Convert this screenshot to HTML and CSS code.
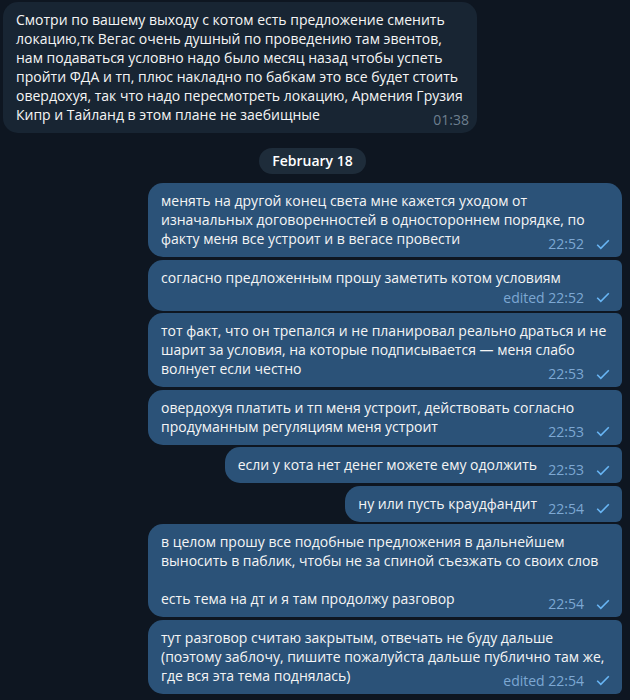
FILE: index.html
```html
<!DOCTYPE html>
<html lang="ru">
<head>
    <meta charset="UTF-8">
    <title>Chat</title>
    <link rel="stylesheet" href="styles.css">
</head>
<body>

    <div class="chat">
        <!-- incoming -->
        <div class="msg in">
            <div class="bubble">
                <div class="text">Смотри по вашему выходу с котом есть предложение сменить локацию,тк Вегас очень душный по проведению там эвентов, нам подаваться условно надо было месяц назад чтобы успеть пройти ФДА и тп, плюс накладно по бабкам это все будет стоить овердохуя, так что надо пересмотреть локацию, Армения Грузия Кипр и Тайланд в этом плане не заебищные<span class="spacer"></span></div>
                <div class="meta"><span class="time">01:38</span></div>
            </div>
        </div>

        <div class="date"><span>February 18</span></div>

        <!-- outgoing -->
        <div class="msg out">
            <div class="bubble">
                <div class="text">менять на другой конец света мне кажется уходом от изначальных договоренностей в одностороннем порядке, по факту меня все устроит и в вегасе провести<span class="spacer"></span></div>
                <div class="meta"><span class="time">22:52</span><svg class="check" viewBox="0 0 14 11"><path d="M1.2 5.8 L4.8 9.3 L12.8 1.3"/></svg></div>
            </div>
        </div>
        <div class="msg out">
            <div class="bubble">
                <div class="text">согласно предложенным прошу заметить котом условиям<span class="spacer edited"></span></div>
                <div class="meta"><span class="time">edited 22:52</span><svg class="check" viewBox="0 0 14 11"><path d="M1.2 5.8 L4.8 9.3 L12.8 1.3"/></svg></div>
            </div>
        </div>
        <div class="msg out">
            <div class="bubble">
                <div class="text">тот факт, что он трепался и не планировал реально драться и не шарит за условия, на которые подписывается — меня слабо волнует если честно<span class="spacer"></span></div>
                <div class="meta"><span class="time">22:53</span><svg class="check" viewBox="0 0 14 11"><path d="M1.2 5.8 L4.8 9.3 L12.8 1.3"/></svg></div>
            </div>
        </div>
        <div class="msg out">
            <div class="bubble">
                <div class="text">овердохуя платить и тп меня устроит, действовать согласно продуманным регуляциям меня устроит<span class="spacer"></span></div>
                <div class="meta"><span class="time">22:53</span><svg class="check" viewBox="0 0 14 11"><path d="M1.2 5.8 L4.8 9.3 L12.8 1.3"/></svg></div>
            </div>
        </div>
        <div class="msg out">
            <div class="bubble">
                <div class="text">если у кота нет денег можете ему одолжить<span class="spacer"></span></div>
                <div class="meta"><span class="time">22:53</span><svg class="check" viewBox="0 0 14 11"><path d="M1.2 5.8 L4.8 9.3 L12.8 1.3"/></svg></div>
            </div>
        </div>
        <div class="msg out">
            <div class="bubble">
                <div class="text">ну или пусть краудфандит<span class="spacer"></span></div>
                <div class="meta"><span class="time">22:54</span><svg class="check" viewBox="0 0 14 11"><path d="M1.2 5.8 L4.8 9.3 L12.8 1.3"/></svg></div>
            </div>
        </div>
        <div class="msg out">
            <div class="bubble">
                <div class="text">в целом прошу все подобные предложения в дальнейшем выносить в паблик, чтобы не за спиной съезжать со своих слов<br><br>есть тема на дт и я там продолжу разговор<span class="spacer"></span></div>
                <div class="meta"><span class="time">22:54</span><svg class="check" viewBox="0 0 14 11"><path d="M1.2 5.8 L4.8 9.3 L12.8 1.3"/></svg></div>
            </div>
        </div>
        <div class="msg out last">
            <div class="bubble">
                <div class="text">тут разговор считаю закрытым, отвечать не буду дальше (поэтому заблочу, пишите пожалуйста дальше публично там же, где вся эта тема поднялась)<span class="spacer edited"></span></div>
                <div class="meta"><span class="time">edited 22:54</span><svg class="check" viewBox="0 0 14 11"><path d="M1.2 5.8 L4.8 9.3 L12.8 1.3"/></svg></div>
            </div>
        </div>
    </div>

</body>
</html>
```

FILE: styles.css
```css
body {
    margin: 0;
    background-color: #0e1621;
    font-family: 'Open Sans', 'Noto Sans', sans-serif;
    color: #f5f5f5;
}

.chat {
    display: flex;
    flex-direction: column;
    gap: 2.5px;
    padding: 2px 8px 0 3px;
}

.msg {
    display: flex;
}

.msg.out {
    justify-content: flex-end;
}

.bubble {
    position: relative;
    max-width: 474px;
    box-sizing: border-box;
    padding: 8px 13px 9px 13px;
    border-radius: 15px;
    font-size: 14px;
    line-height: 19px;
}

.msg.in .bubble {
    background-color: #182533;
    padding-right: 8px;
}

.msg.out .bubble {
    background-color: #2b5278;
    border-radius: 15px 6px 6px 15px;
}

.msg.out:nth-child(3) .bubble {
    border-top-right-radius: 15px;
}

.text {
    display: flow-root;
}

/* reserves room for the time on the last line */
.spacer {
    float: right;
    width: 72px;
    height: 15px;
}

.msg.in .spacer {
    width: 50px;
}

.spacer.edited {
    width: 120px;
}

.meta {
    position: absolute;
    right: 12px;
    bottom: 5px;
    display: flex;
    align-items: center;
    gap: 12px;
    font-size: 14px;
    line-height: 16px;
    color: #7da8d3;
}

.msg.in .meta {
    right: 8px;
    color: #6d7f8f;
}

.check {
    width: 14px;
    height: 11px;
    fill: none;
    stroke: #68b5f4;
    stroke-width: 1.6;
}

.date {
    display: flex;
    justify-content: center;
    margin: 12px 0 7px;
}

.date span {
    background-color: #1e2c3a;
    border-radius: 13px;
    padding: 0 13px;
    line-height: 26px;
    font-size: 14px;
    font-weight: 600;
    color: #fff;
}
```
